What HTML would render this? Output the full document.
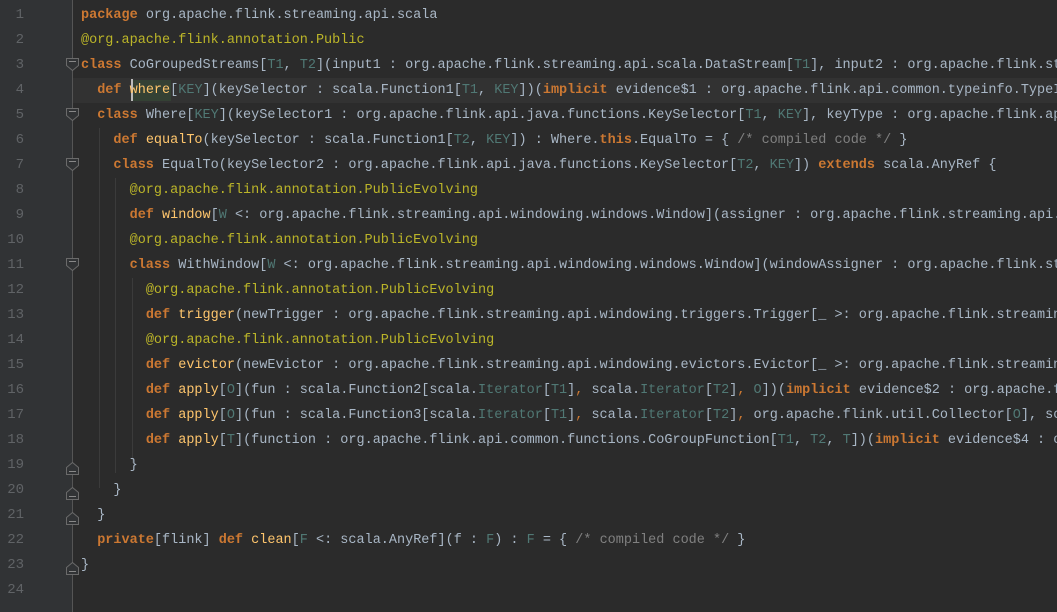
<!DOCTYPE html>
<html><head><meta charset="utf-8"><style>
html,body{margin:0;padding:0;width:1057px;height:612px;overflow:hidden;background:#2b2b2b}
.g{position:absolute;left:0;top:0;width:72px;height:612px;background:#313335}
.ln{position:absolute;left:0;width:24px;text-align:right;font:14px "Liberation Mono",monospace;color:#606366;line-height:25px}
.code{position:absolute;left:81px;top:3px;width:976px;height:609px;overflow:hidden;font:13.5px "Liberation Mono",monospace;color:#a9b7c6;line-height:25px;white-space:pre}
.k{color:#cc7832;font-weight:bold}.a{color:#bbb529}.t{color:#507874}.f{color:#ffc66d}.c{color:#808080}.o{color:#cc7832}
.hl{position:absolute;left:72px;top:78px;width:985px;height:25px;background:#323232}
.ig{position:absolute;width:1px;background:#3b3b3b}
</style></head><body>
<div class="g"></div>
<div class="hl"></div>
<div class="ig" style="left:99px;top:128px;height:360px"></div>
<div class="ig" style="left:115px;top:178px;height:295px"></div>
<div class="ig" style="left:132px;top:278px;height:185px"></div>
<div class="ln" style="top:3px">1<br>2<br>3<br>4<br>5<br>6<br>7<br>8<br>9<br>10<br>11<br>12<br>13<br>14<br>15<br>16<br>17<br>18<br>19<br>20<br>21<br>22<br>23<br>24</div>
<svg style="position:absolute;left:0;top:0" width="82" height="612">
<line x1="72.5" y1="0" x2="72.5" y2="612" stroke="#555" stroke-width="1"/>
<g fill="#313335" stroke="#6a6a6a" stroke-width="1">
<path d="M66.5 58.5h12v7l-6 5l-6-5z"/><path d="M66.5 108.5h12v7l-6 5l-6-5z"/>
<path d="M66.5 158.5h12v7l-6 5l-6-5z"/><path d="M66.5 258.5h12v7l-6 5l-6-5z"/>
<path d="M66.5 467.5l6-5l6 5v7h-12z"/><path d="M66.5 492.5l6-5l6 5v7h-12z"/>
<path d="M66.5 517.5l6-5l6 5v7h-12z"/><path d="M66.5 567.5l6-5l6 5v7h-12z"/>
</g>
<g stroke="#888" stroke-width="1">
<line x1="69" y1="61.5" x2="76" y2="61.5"/><line x1="69" y1="111.5" x2="76" y2="111.5"/>
<line x1="69" y1="161.5" x2="76" y2="161.5"/><line x1="69" y1="261.5" x2="76" y2="261.5"/>
<line x1="69" y1="471.5" x2="76" y2="471.5"/><line x1="69" y1="496.5" x2="76" y2="496.5"/>
<line x1="69" y1="521.5" x2="76" y2="521.5"/><line x1="69" y1="571.5" x2="76" y2="571.5"/>
</g>
</svg>
<div style="position:absolute;left:131px;top:80px;width:40px;height:21px;background:#344134"></div>
<div style="position:absolute;left:131px;top:79px;width:2px;height:22px;background:#bbbbbb"></div>
<div class="code"><span class="k">package</span> org.apache.flink.streaming.api.scala
<span class="a">@org.apache.flink.annotation.Public</span>
<span class="k">class</span> CoGroupedStreams[<span class="t">T1</span>, <span class="t">T2</span>](input1 : org.apache.flink.streaming.api.scala.DataStream[<span class="t">T1</span>], input2 : org.apache.flink.streaming.api.scala.DataStream[<span class="t">T2</span>])
  <span class="k">def</span> <span class="f">where</span>[<span class="t">KEY</span>](keySelector : scala.Function1[<span class="t">T1</span>, <span class="t">KEY</span>])(<span class="k">implicit</span> evidence$1 : org.apache.flink.api.common.typeinfo.TypeInformation
  <span class="k">class</span> Where[<span class="t">KEY</span>](keySelector1 : org.apache.flink.api.java.functions.KeySelector[<span class="t">T1</span>, <span class="t">KEY</span>], keyType : org.apache.flink.api.common
    <span class="k">def</span> <span class="f">equalTo</span>(keySelector : scala.Function1[<span class="t">T2</span>, <span class="t">KEY</span>]) : Where.<span class="k">this</span>.EqualTo = { <span class="c">/* compiled code */</span> }
    <span class="k">class</span> EqualTo(keySelector2 : org.apache.flink.api.java.functions.KeySelector[<span class="t">T2</span>, <span class="t">KEY</span>]) <span class="k">extends</span> scala.AnyRef {
      <span class="a">@org.apache.flink.annotation.PublicEvolving</span>
      <span class="k">def</span> <span class="f">window</span>[<span class="t">W</span> &lt;: org.apache.flink.streaming.api.windowing.windows.Window](assigner : org.apache.flink.streaming.api.windowing
      <span class="a">@org.apache.flink.annotation.PublicEvolving</span>
      <span class="k">class</span> WithWindow[<span class="t">W</span> &lt;: org.apache.flink.streaming.api.windowing.windows.Window](windowAssigner : org.apache.flink.streaming
        <span class="a">@org.apache.flink.annotation.PublicEvolving</span>
        <span class="k">def</span> <span class="f">trigger</span>(newTrigger : org.apache.flink.streaming.api.windowing.triggers.Trigger[_ &gt;: org.apache.flink.streaming.api
        <span class="a">@org.apache.flink.annotation.PublicEvolving</span>
        <span class="k">def</span> <span class="f">evictor</span>(newEvictor : org.apache.flink.streaming.api.windowing.evictors.Evictor[_ &gt;: org.apache.flink.streaming.api
        <span class="k">def</span> <span class="f">apply</span>[<span class="t">O</span>](fun : scala.Function2[scala.<span class="t">Iterator</span>[<span class="t">T1</span>]<span class="o">,</span> scala.<span class="t">Iterator</span>[<span class="t">T2</span>]<span class="o">,</span> <span class="t">O</span>])(<span class="k">implicit</span> evidence$2 : org.apache.flink
        <span class="k">def</span> <span class="f">apply</span>[<span class="t">O</span>](fun : scala.Function3[scala.<span class="t">Iterator</span>[<span class="t">T1</span>]<span class="o">,</span> scala.<span class="t">Iterator</span>[<span class="t">T2</span>]<span class="o">,</span> org.apache.flink.util.Collector[<span class="t">O</span>], scala.Unit]
        <span class="k">def</span> <span class="f">apply</span>[<span class="t">T</span>](function : org.apache.flink.api.common.functions.CoGroupFunction[<span class="t">T1</span>, <span class="t">T2</span>, <span class="t">T</span>])(<span class="k">implicit</span> evidence$4 : org.apache
      }
    }
  }
  <span class="k">private</span>[flink] <span class="k">def</span> <span class="f">clean</span>[<span class="t">F</span> &lt;: scala.AnyRef](f : <span class="t">F</span>) : <span class="t">F</span> = { <span class="c">/* compiled code */</span> }
}
</div>
</body></html>
